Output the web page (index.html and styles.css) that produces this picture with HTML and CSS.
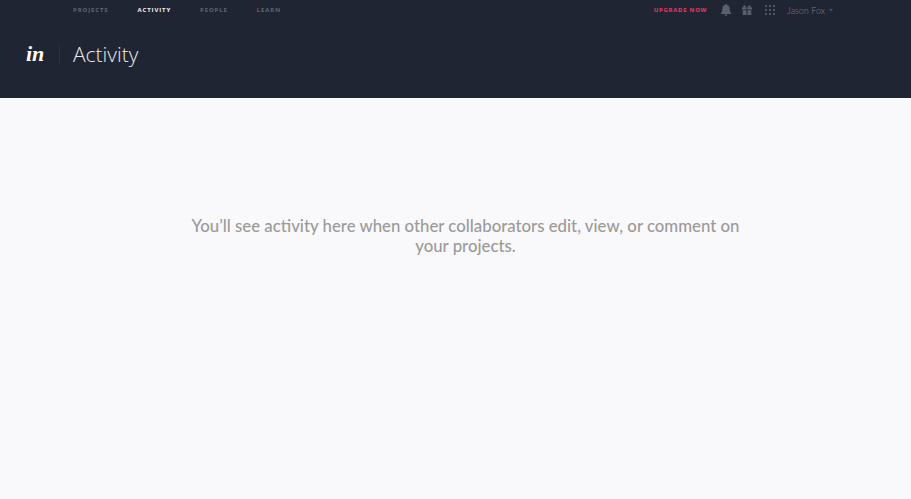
FILE: index.html
```
<!DOCTYPE html>
<html lang="en">
<head>
<meta charset="utf-8">
<title>Activity</title>
<link rel="stylesheet" href="styles.css">
</head>
<body>
<header class="header">
  <div class="topbar">
    <nav class="nav">
      <a class="nav-link">PROJECTS</a>
      <a class="nav-link active">ACTIVITY</a>
      <a class="nav-link">PEOPLE</a>
      <a class="nav-link">LEARN</a>
    </nav>
    <div class="tools">
      <a class="upgrade">UPGRADE NOW</a>
      <svg class="icon icon-bell" width="10" height="12" viewBox="0 0 10 12"><path fill="#5a6070" d="M5 0a1 1 0 0 1 1 1c2 .5 2.700 2 2.700 4 0 2 .3 3 1.300 4.200V10H0v-.8C1 8 1.300 7 1.300 5c0-2 .7-3.500 2.700-4a1 1 0 0 1 1-1zM3.700 10.600h2.600A1.300 1.300 0 0 1 5 12a1.300 1.300 0 0 1-1.300-1.400z"/></svg>
      <svg class="icon icon-gift" width="10" height="10" viewBox="0 0 10 10"><path fill="#5a6070" d="M0 2.200h4.500v2.300H0zM5.500 2.200H10v2.300H5.500zM.7 5.300h3.800V10H.7zM5.500 5.300h3.800V10H5.500zM2 0l2.500 1.700V2H2.300C1.200 1.800 1 .5 2 0zM8 0L5.500 1.700V2h2.200C8.800 1.800 9 .5 8 0z"/></svg>
      <svg class="icon" width="10" height="10" viewBox="0 0 10 10"><path fill="#4d5363" d="M0 0h2v2H0zM4 0h2v2H4zM8 0h2v2H8zM0 4h2v2H0zM4 4h2v2H4zM8 4h2v2H8zM0 8h2v2H0zM4 8h2v2H4zM8 8h2v2H8z"/></svg>
      <span class="user">Jason Fox<svg class="caret" width="4" height="3" viewBox="0 0 4 3"><path fill="#4d5363" d="M0 0h4L2 2.500z"/></svg></span>
    </div>
  </div>
  <div class="titlebar">
    <span class="logo">in</span>
    <span class="divider"></span>
    <h1 class="title">Activity</h1>
  </div>
</header>
<main class="main">
  <p class="empty">You’ll see activity here when other collaborators edit, view, or comment on your projects.</p>
</main>
</body>
</html>
```
FILE: styles.css
```
* { box-sizing: border-box; }
html, body { margin: 0; height: 100%; }
body {
  display: flex;
  flex-direction: column;
  min-height: 499px;
  background: #f9f9fc;
  font-family: "Liberation Sans", Arial, sans-serif;
  overflow: hidden;
}
.header {
  height: 98px;
  background: #202533;
  flex: none;
}
.topbar {
  display: flex;
  justify-content: space-between;
  align-items: center;
  height: 20px;
  padding: 0 78px 0 73px;
}
.nav { display: flex; gap: 29px; }
.nav-link {
  font-family: "Open Sans", sans-serif;
  font-size: 6px;
  font-weight: 700;
  letter-spacing: .88px;
  color: #5f6576;
}
.nav-link.active { color: #f2f3f5; }
.tools { display: flex; align-items: center; }
.upgrade {
  font-family: "Open Sans", sans-serif;
  font-size: 6px;
  font-weight: 700;
  letter-spacing: .7px;
  color: #ee3766;
  margin-right: 14px;
}
.icon { margin-right: 12px; display: block; }
.icon-bell { margin-right: 11px; }
.icon-gift { margin-right: 13px; }
.user {
  display: flex;
  align-items: center;
  gap: 4px;
  font-family: "Lato", sans-serif;
  font-size: 9px;
  font-weight: 300;
  color: #7b808e;
}
.titlebar {
  display: flex;
  align-items: center;
  height: 20px;
  margin-top: 24px;
  padding-left: 26px;
}
.logo {
  width: 33px;
  font-family: "Liberation Serif", serif;
  font-size: 22px;
  font-weight: 700;
  font-style: italic;
  color: #fff;
  line-height: 20px;
}
.divider {
  width: 1px;
  height: 20px;
  background: #2b3040;
}
.title {
  margin: 0 0 0 13px;
  font-family: "Open Sans", sans-serif;
  font-size: 21px;
  font-weight: 300;
  color: #e8e9ec;
}
.main {
  flex: 1;
  padding: 118px 0 0 20px;
}
.empty {
  width: 560px;
  margin: 0 auto;
  text-align: center;
  font-family: "Lato", sans-serif;
  font-size: 16.800px;
  font-weight: 500;
  line-height: 20px;
  color: #9c9a98;
}
```
